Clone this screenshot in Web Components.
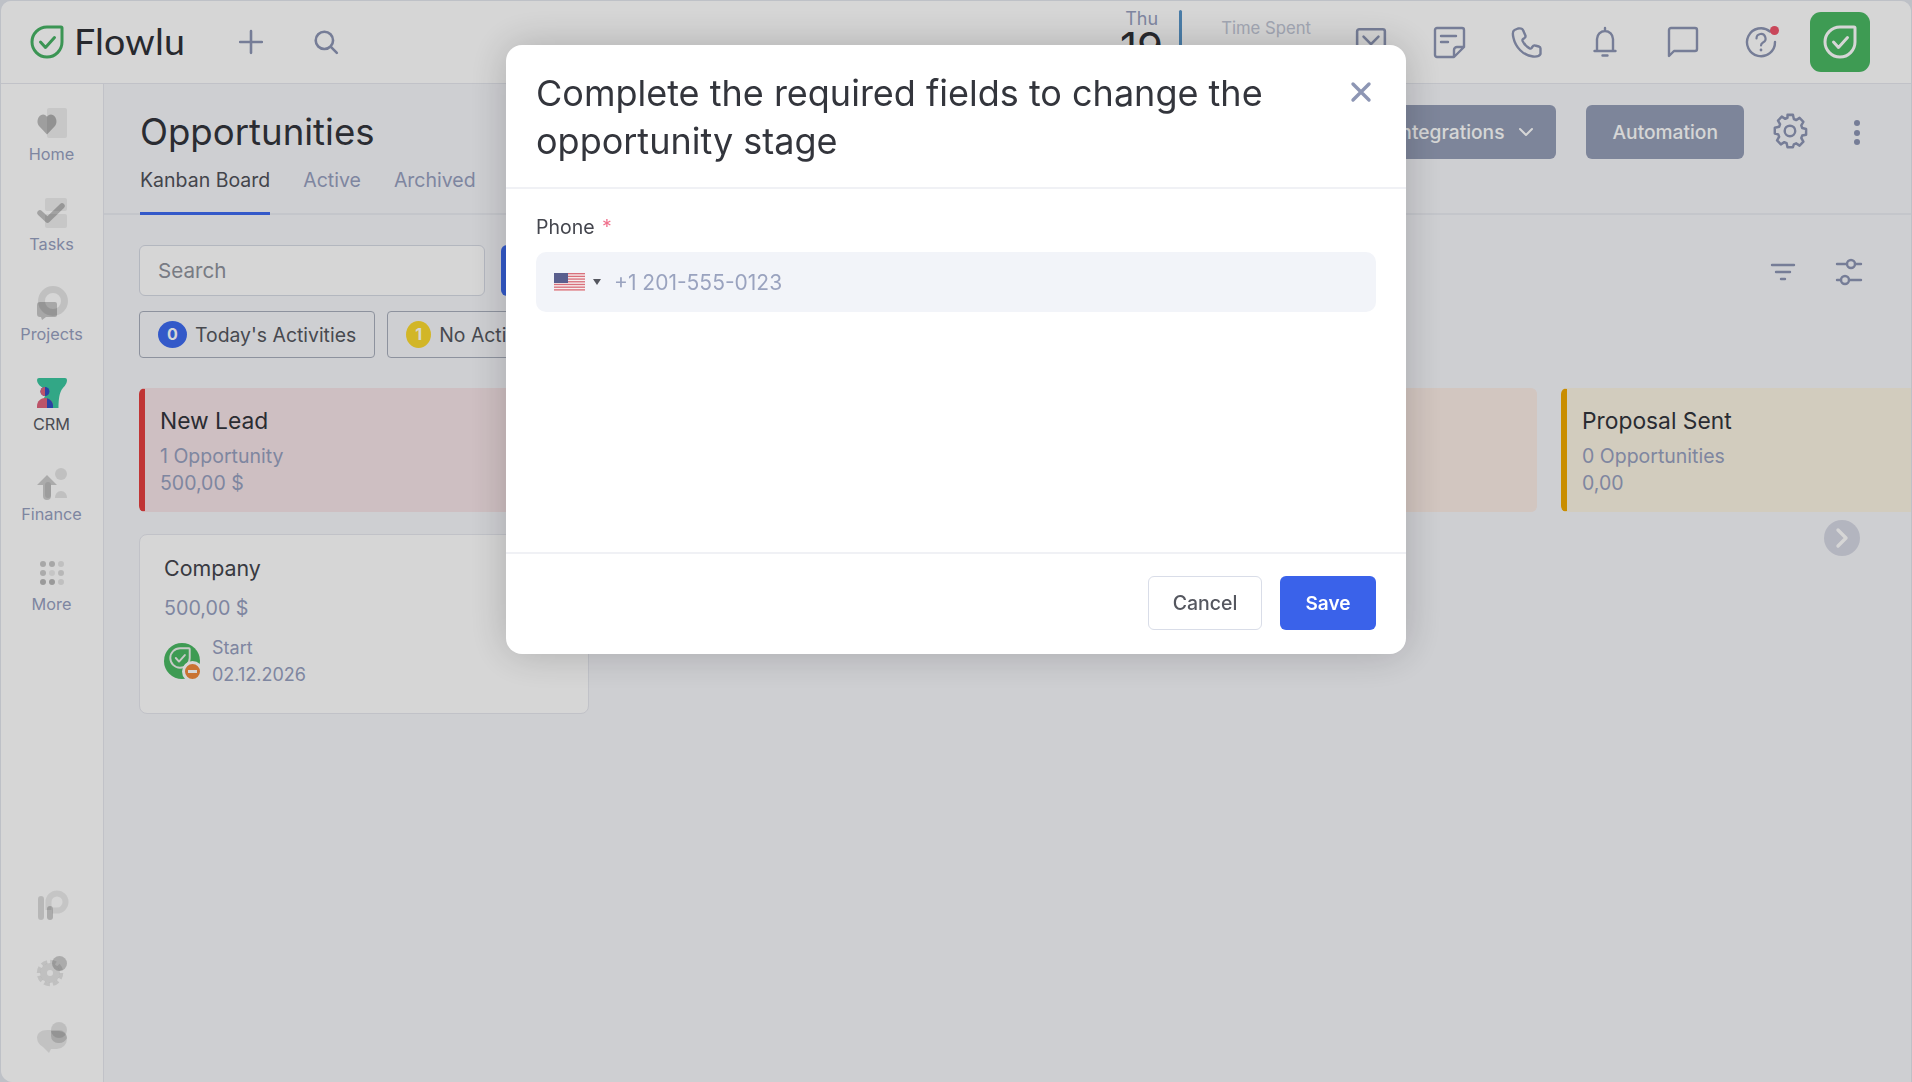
<!doctype html>
<html lang="en">
<head>
<meta charset="utf-8">
<title>Flowlu</title>
<style>
  html, body { margin: 0; height: 100%; background: #e3e6ee; overflow: hidden; }
  body { font-family: Inter, "Liberation Sans", sans-serif; }
</style>
</head>
<body>
<fl-app>
  <fl-topbar slot="top"></fl-topbar>
  <fl-sidebar slot="side"></fl-sidebar>
  <fl-page-head slot="main" title="Opportunities"></fl-page-head>
  <fl-toolbar slot="main"></fl-toolbar>
  <fl-board slot="main">
    <fl-column color="#e53e3e" tint="#f6e4e7" title="New Lead" count="1 Opportunity" sum="500,00 $">
      <fl-deal title="Company" sum="500,00 $" start="02.12.2026"></fl-deal>
    </fl-column>
    <fl-column color="#e07b3e" tint="#fbece5"></fl-column>
    <fl-column color="#e8894a" tint="#fbece5"></fl-column>
    <fl-column color="#f0a800" tint="#fbf3e3" title="Proposal Sent" count="0 Opportunities" sum="0,00"></fl-column>
  </fl-board>
</fl-app>
<fl-modal title="Complete the required fields to change the opportunity stage">
  <fl-phone-field label="Phone" placeholder="+1 201-555-0123"></fl-phone-field>
</fl-modal>

<script>
const muted = "#97a0bf";

const icons = {
	plus: `<path d="M12 2v20M2 12h20" fill="none" stroke="currentColor" stroke-width="2.4" stroke-linecap="round"/>`,
	search: `<circle cx="10.5" cy="10.5" r="8" fill="none" stroke="currentColor" stroke-width="2.4"/><path d="M16.5 16.5 22 22" fill="none" stroke="currentColor" stroke-width="2.4" stroke-linecap="round"/>`,
	mail: `<rect x="2" y="3" width="26" height="24" rx="2" fill="none" stroke="currentColor" stroke-width="2.4"/><path d="M8 10l7 7 7-7" fill="none" stroke="currentColor" stroke-width="2.4" stroke-linecap="round"/>`,
	note: `<path d="M20 31H4a2 2 0 0 1-2-2V4a2 2 0 0 1 2-2h25a2 2 0 0 1 2 2v17L21 31zM21 31v-7a3 3 0 0 1 3-3h7" fill="none" stroke="currentColor" stroke-width="2.4" stroke-linejoin="round"/><path d="M8 10h15M8 16h7" stroke="currentColor" stroke-width="2.4" stroke-linecap="round"/>`,
	phone: `<path d="M7 2.5 3.5 4C1.5 5 1.5 8 2.5 12 4.5 21 12 29.5 22 30.5c3 .3 6.5-.5 7.5-2.5v-5.5c0-1-.7-1.7-1.7-2L24 19.5c-1-.3-1.9.2-2.4 1l-1 1.500c-.5.6-1.2.8-2 .4-3-1.700-5.600-4.500-7-7.500-.3-.8-.1-1.500.5-2l1.500-1c.8-.6 1.100-1.500.8-2.400L12.200 4.500c-.4-1.300-2-2.500-5.200-2z" fill="none" stroke="currentColor" stroke-width="2.4" stroke-linejoin="round"/>`,
	bell: `<path d="M4 25V13a8 8 0 0 1 16 0v12M1.5 25h21M12 2v3M9.5 29.5h5" fill="none" stroke="currentColor" stroke-width="2.4" stroke-linecap="round" stroke-linejoin="round"/>`,
	chat: `<path d="M2 30V4a2 2 0 0 1 2-2h24a2 2 0 0 1 2 2v19a2 2 0 0 1-2 2H7z" fill="none" stroke="currentColor" stroke-width="2.4" stroke-linejoin="round"/>`,
	help: `<path d="M25 5.5A14 14 0 1 0 30 16" fill="none" stroke="currentColor" stroke-width="2.4" stroke-linecap="round"/><path d="M11.500 12.500a4.500 4.500 0 1 1 6.500 4c-1.400.8-2 1.500-2 3" fill="none" stroke="currentColor" stroke-width="2.2" stroke-linecap="round"/><circle cx="16" cy="24" r="1.400" fill="currentColor"/>`,
	gear: `<path d="M13 2h6l1 4.300 2.500 1.100 3.800-2.300 4.200 4.200-2.300 3.800 1 2.600 4.300 1.100v6l-4.300 1-1 2.500 2.300 3.800-4.200 4.200-3.800-2.300-2.500 1L19 36h-6l-1-4.300-2.500-1-3.800 2.300-4.200-4.200 2.300-3.800-1-2.500L-1 21.500v-6l4.800-1.100 1-2.600L2.500 8l4.200-4.200 3.800 2.300L13 5z" transform="translate(2.500 0) scale(.86 .9)" fill="none" stroke="currentColor" stroke-width="2.7" stroke-linejoin="round"/><circle cx="16" cy="17" r="5" fill="none" stroke="currentColor" stroke-width="2.3"/>`,
	filter: `<path d="M1 2h22M5 9h14M10 16h4" fill="none" stroke="currentColor" stroke-width="2.4" stroke-linecap="round"/>`,
	sliders: `<path d="M1 6h10M19 6h6M1 22h4M13 22h12" fill="none" stroke="currentColor" stroke-width="2.4" stroke-linecap="round"/><circle cx="15" cy="6" r="4" fill="none" stroke="currentColor" stroke-width="2.4"/><circle cx="9" cy="22" r="4" fill="none" stroke="currentColor" stroke-width="2.4"/>`,
	shield: `<path d="M31 2H17a15 15 0 1 0 15 15V3a1 1 0 0 0-1-1z" fill="none" stroke="currentColor" stroke-width="3"/><path d="M10.500 17l5 5.500 9-10" fill="none" stroke="currentColor" stroke-width="3" stroke-linecap="round" stroke-linejoin="round"/>`,
	chevron: `<path d="M2 2l6 6 6-6" fill="none" stroke="currentColor" stroke-width="2" stroke-linecap="round" stroke-linejoin="round"/>`,
	close: `<path d="M3 3l16 16M19 3 3 19" fill="none" stroke="currentColor" stroke-width="3.4" stroke-linecap="round"/>`,
	next: `<path d="M2 2l8 8-8 8" fill="none" stroke="currentColor" stroke-width="3.4" stroke-linecap="round" stroke-linejoin="round"/>`,
	home: `<rect x="10" width="20" height="30" rx="2" fill="#000" opacity=".07"/><path d="M10 26.500 2 18C-1 14.500 .5 7 6 6.500c2 0 3.200 1 4 2.300.8-1.300 2-2.300 4-2.300 5.500.5 7 8 4 11.500z" fill="#000" opacity=".26"/>`,
	tasks: `<rect x="8" width="22" height="13" rx="2" fill="#000" opacity=".07"/><rect x="8" y="16" width="22" height="14" rx="2" fill="#000" opacity=".07"/><path d="M3 15l7.500 7L25 8" fill="none" stroke="#000" stroke-opacity=".24" stroke-width="5.500" stroke-linecap="round" stroke-linejoin="round"/>`,
	projects: `<circle cx="16" cy="13" r="11.500" fill="none" stroke="#000" stroke-opacity=".1" stroke-width="7"/><path d="M3 14h15a2 2 0 0 1 2 2v11a2 2 0 0 1-2 2H9l-4 3-1-3H3a3 3 0 0 1-3-3V17a3 3 0 0 1 3-3z" fill="#000" opacity=".22"/>`,
	crm: `<path d="M2 0h26a2 2 0 0 1 2 2c0 5-4 7-6 11-2 4-2.500 11-2.500 17H2l8-16C8 10 0 8 0 2a2 2 0 0 1 2-2z" fill="#3cc8a0"/><circle cx="8" cy="13.500" r="4.500" fill="#3050c4"/><path d="M8 9a4.500 4.500 0 0 0 0 9z" fill="#e0647c"/><path d="M0 30v-2c0-5 4-8 8-8s8 3 8 8v2z" fill="#e0647c"/><path d="M10 20.300c3.500 1 6 4 6 7.700v2H10z" fill="#3050c4"/>`,
	finance: `<circle cx="24" cy="6" r="6" fill="#000" opacity=".1"/><path d="M18 30c0-4 2.500-7 6-7s6 3 6 7z" fill="#000" opacity=".1"/><path d="M10 7 0 17h6v11a4 4 0 0 0 8 0V17h6z" fill="#000" opacity=".2"/><rect x="8" y="14" width="6" height="16" rx="3" fill="#000" opacity=".08"/>`,
	pulse: `<path d="M15 20v-8a8.500 8.500 0 1 1 8.500 8.500H19" transform="translate(-3.500 0)" fill="none" stroke="#000" stroke-opacity=".08" stroke-width="6"/><rect x="1" y="6" width="6" height="24" rx="3" fill="#000" opacity=".14"/><rect x="10" y="16" width="6" height="14" rx="3" fill="#000" opacity=".2"/>`,
	tools: `<g fill="none" stroke="#000" stroke-opacity=".1"><circle cx="13" cy="17" r="6.500" stroke-width="7"/><circle cx="13" cy="17" r="11.500" stroke-width="3.500" stroke-dasharray="6 3"/></g><circle cx="22.500" cy="7.500" r="7.500" fill="#000" opacity=".2"/>`,
	support: `<path d="M10 8h12a8 8 0 0 1 8 8v1a10 10 0 0 1-10 10h-6l-2 4-6-6a11 11 0 0 1-6-9c0-5 4-8 10-8z" fill="#000" opacity=".09"/><circle cx="22" cy="8" r="8" fill="#000" opacity=".11"/><path d="M14 9v5a7 7 0 0 0 7 7 9 9 0 0 0 9-5c-.3-4-3.500-7-8-7z" fill="#000" opacity=".14"/>`,
};

// inline svg for a name from the table above
function svg(name, w, h, box) {
	return `<svg xmlns="http://www.w3.org/2000/svg" width="${w}" height="${h}" viewBox="${box || `0 0 ${w} ${h}`}" style="display:block;flex:none;overflow:visible">${icons[name]}</svg>`;
}

class Base extends HTMLElement {
	constructor() {
		super();
		this.attachShadow({ mode: "open" });
	}
	attr(name) {
		return this.getAttribute(name) ?? "";
	}
}

customElements.define(
	"fl-app",
	class extends Base {
		connectedCallback() {
			this.shadowRoot.innerHTML = `
				<style>
					:host { display: grid; grid-template: 83px 1fr / 103px 1fr; width: 1910px; height: 1081px; margin: 1px 0 0 1px; background: #f6f7fb; border-radius: 10px 10px 0 12px; overflow: hidden; position: relative; }
					.top { grid-column: 1 / 3; }
					.main { display: flex; flex-direction: column; min-width: 0; overflow: hidden; }
				</style>
				<div class="top"><slot name="top"></slot></div>
				<slot name="side"></slot>
				<div class="main"><slot name="main"></slot></div>`;
		}
	},
);

customElements.define(
	"fl-topbar",
	class extends Base {
		connectedCallback() {
			const dot = `<i style="position:absolute;left:25px;top:0;width:9px;height:9px;border-radius:50%;background:#f0556c"></i>`;
			this.shadowRoot.innerHTML = `
				<style>
					:host { display: flex; align-items: center; height: 83px; box-sizing: border-box; background: #fff; border-bottom: 1px solid #e6e8ef; padding: 0 41px 0 29px; color: #8d96b4; }
					.logo { display: flex; align-items: center; gap: 10px; color: #47b265; width: 180px; }
					.logo span { font: 400 37.5px/1 Lato, sans-serif; color: #2f3137; letter-spacing: .2px; margin-top: -2px; }
					.add { margin-left: 28px; }
					.find { margin-left: 49px; }
					.date { margin-left: auto; font-size: 18px; line-height: 20px; text-align: center; align-self: flex-start; padding-top: 8px; color: ${muted}; }
					.date b { display: block; font: 400 42px/30px Inter, sans-serif; color: #2f3137; margin-top: 4px; }
					.bar { width: 3px; height: 40px; background: #5895c8; margin: 9px 0 0 16px; align-self: flex-start; border-radius: 2px; }
					.spent { margin-left: 39px; font-size: 16.7px; color: #c2c7d6; align-self: flex-start; padding-top: 17px; }
					.tool { display: flex; align-items: center; margin-left: 21px; }
					.tool > div { width: 78px; display: flex; justify-content: center; position: relative; }
					.app { width: 60px; height: 60px; border-radius: 11px; background: #4ab963; color: #fff; display: flex; align-items: center; justify-content: center; margin-left: 10px; }
				</style>
				<div class="logo">${svg("shield", 34, 34)}<span>Flowlu</span></div>
				<div class="add">${svg("plus", 26, 26, "0 0 24 24")}</div>
				<div class="find">${svg("search", 26, 26, "0 0 24 24")}</div>
				<div class="date">Thu<b>19</b></div>
				<div class="bar"></div>
				<div class="spent">Time Spent</div>
				<div class="tool">
					<div>${svg("mail", 32, 32, "0 0 30 30")}</div>
					<div>${svg("note", 33, 33)}</div>
					<div>${svg("phone", 32, 32)}</div>
					<div>${svg("bell", 24, 32)}</div>
					<div>${svg("chat", 32, 32)}</div>
					<div><span style="position:relative;display:block">${svg("help", 32, 32)}${dot}</span></div>
				</div>
				<div class="app">${svg("shield", 34, 34)}</div>`;
		}
	},
);

customElements.define(
	"fl-nav-item",
	class extends Base {
		connectedCallback() {
			this.shadowRoot.innerHTML = `
				<style>
					:host { display: flex; flex-direction: column; align-items: center; height: 90px; font-size: 16.3px; line-height: 20px; color: ${muted}; }
					:host([active]) { color: #5a5c64; }
					span { margin-top: 6px; }
				</style>
				<slot></slot><span>${this.attr("label")}</span>`;
		}
	},
);

customElements.define(
	"fl-sidebar",
	class extends Base {
		connectedCallback() {
			let dots = "";
			const shade = [.22, .22, .1, .2, .08, .14, .28, .28, .1];
			shade.forEach((o, i) => {
				dots += `<circle cx="${3 + (i % 3) * 9}" cy="${3 + Math.floor(i / 3) * 9}" r="3" fill="#000" opacity="${o}"/>`;
			});
			this.shadowRoot.innerHTML = `
				<style>
					:host { display: flex; flex-direction: column; background: #fff; border-right: 1px solid #e6e8ef; padding: 24px 1px 0 0; box-sizing: border-box; height: 998px; width: 103px; }
					.low { margin-top: auto; display: flex; flex-direction: column; align-items: center; gap: 36px; padding-bottom: 30px; }
					svg { display: block; }
				</style>
				<fl-nav-item label="Home">${svg("home", 30, 30)}</fl-nav-item>
				<fl-nav-item label="Tasks">${svg("tasks", 30, 30)}</fl-nav-item>
				<fl-nav-item label="Projects">${svg("projects", 30, 30)}</fl-nav-item>
				<fl-nav-item label="CRM" active>${svg("crm", 30, 30)}</fl-nav-item>
				<fl-nav-item label="Finance">${svg("finance", 30, 30)}</fl-nav-item>
				<fl-nav-item label="More"><svg xmlns="http://www.w3.org/2000/svg" width="30" height="30" viewBox="-3 -3 30 30" style="display:block">${dots}</svg></fl-nav-item>
				<div class="low">${svg("pulse", 30, 30)}${svg("tools", 30, 30)}${svg("support", 30, 30)}</div>`;
		}
	},
);

customElements.define(
	"fl-page-head",
	class extends Base {
		connectedCallback() {
			this.shadowRoot.innerHTML = `
				<style>
					:host { display: flex; height: 131px; box-sizing: border-box; border-bottom: 2px solid #eaecf2; padding: 26px 0 0 36px; justify-content: space-between; }
					h1 { margin: 0; font: 400 36.6px/44px Inter, sans-serif; color: #33353c; }
					nav { display: flex; gap: 33px; margin-top: 9px; font-size: 19.5px; line-height: 34px; color: ${muted}; }
					nav a { display: block; height: 52px; box-sizing: border-box; }
					nav a.on { color: #50525a; border-bottom: 3px solid #3d6bf0; }
					.acts { display: flex; align-items: flex-start; color: #8d96b4; margin-top: -5px; }
					.btn { height: 54px; border-radius: 6px; background: #969fb8; color: #fff; font: 500 19.2px/54px Inter, sans-serif; padding: 0 26px; display: flex; align-items: center; gap: 14px; box-sizing: border-box; }
					.int { margin-right: 30px; padding-right: 22px; }
					.gear { margin: 8px 45px 0 29px; }
					.more { margin: 15px 51px 0 0; width: 6px; display: flex; flex-direction: column; gap: 3.5px; }
					.more i { width: 6px; height: 6px; border-radius: 50%; background: currentColor; }
				</style>
				<div>
					<h1>${this.attr("title")}</h1>
					<nav><a class="on">Kanban Board</a><a>Active</a><a>Archived</a></nav>
				</div>
				<div class="acts">
					<div class="btn int">Integrations ${svg("chevron", 16, 10)}</div>
					<div class="btn">Automation</div>
					<div class="gear">${svg("gear", 36, 38, "0 0 34 36")}</div>
					<div class="more"><i></i><i></i><i></i></div>
				</div>`;
		}
	},
);

customElements.define(
	"fl-chip",
	class extends Base {
		connectedCallback() {
			this.shadowRoot.innerHTML = `
				<style>
					:host { display: flex; align-items: center; gap: 8px; height: 47px; box-sizing: border-box; border: 1px solid #a9afbd; border-radius: 4px; padding: 0 18px; font-size: 19.4px; color: #55575f; white-space: nowrap; }
					b { width: ${this.attr("w") || 29}px; height: 27px; border-radius: 50%; background: ${this.attr("color")}; color: #fff; font: 700 16px/27px Inter, sans-serif; text-align: center; }
				</style>
				<b>${this.attr("n")}</b><slot></slot>`;
		}
	},
);

customElements.define(
	"fl-toolbar",
	class extends Base {
		connectedCallback() {
			this.shadowRoot.innerHTML = `
				<style>
					:host { display: block; padding: 30px 0 0 35px; position: relative; color: #8d96b4; }
					.row { display: flex; gap: 12px; align-items: center; }
					.search { width: 346px; height: 51px; box-sizing: border-box; border: 1px solid #d6dae4; border-radius: 6px; background: #fff; font-size: 20.6px; line-height: 49px; padding-left: 18px; color: #8f939d; }
					.new { width: 200px; height: 51px; border-radius: 6px; background: #3d6bf0; margin-left: 4px; }
					.chips { display: flex; gap: 12px; margin-top: 15px; }
					.r { position: absolute; right: 49px; top: 43px; display: flex; gap: 41px; align-items: center; }
				</style>
				<div class="row"><div class="search">Search</div><div class="new"></div></div>
				<div class="chips"><fl-chip n="0" color="#3d6bf0">Today's Activities</fl-chip><fl-chip n="1" w="25" color="#fbd92f">No Activities</fl-chip></div>
				<div class="r">${svg("filter", 24, 18)}${svg("sliders", 26, 28)}</div>`;
		}
	},
);

customElements.define(
	"fl-board",
	class extends Base {
		connectedCallback() {
			this.shadowRoot.innerHTML = `
				<style>
					:host { display: flex; gap: 24px; padding: 30px 0 0 35px; position: relative; flex: 1; width: max-content; color: #fff; }
					.next { position: absolute; left: 1720px; top: 162px; width: 36px; height: 36px; border-radius: 50%; background: #d6d8e4; display: flex; align-items: center; justify-content: center; }
				</style>
				<slot></slot>
				<div class="next">${svg("next", 12, 20)}</div>`;
		}
	},
);

customElements.define(
	"fl-column",
	class extends Base {
		connectedCallback() {
			this.shadowRoot.innerHTML = `
				<style>
					:host { display: flex; flex-direction: column; gap: 22px; width: 450px; flex: none; }
					.head { height: 124px; box-sizing: border-box; background: ${this.attr("tint")}; border: 1px solid ${this.attr("tint")}; border-left: 6px solid ${this.attr("color")}; border-radius: 6px; padding: 17px 0 0 15px; }
					h2 { margin: 0 0 7px; font: 400 22.8px/30px Inter, sans-serif; color: #33353c; }
					p { margin: 0; font-size: 19.5px; line-height: 27px; color: ${muted}; }
				</style>
				<div class="head">
					${this.hasAttribute("title") ? `<h2>${this.attr("title")}</h2><p>${this.attr("count")}</p><p>${this.attr("sum")}</p>` : ""}
				</div>
				<slot></slot>`;
		}
	},
);

customElements.define(
	"fl-deal",
	class extends Base {
		connectedCallback() {
			this.shadowRoot.innerHTML = `
				<style>
					:host { display: block; height: 180px; box-sizing: border-box; background: #fff; border: 1px solid #e6e8ef; border-radius: 8px; padding: 18px 0 0 24px; }
					h3 { margin: 0; font: 400 21.4px/30px Inter, sans-serif; color: #44464e; }
					.sum { font-size: 19.7px; line-height: 28px; margin-top: 11px; color: ${muted}; }
					.row { display: flex; gap: 12px; align-items: center; margin-top: 12px; font-size: 18px; line-height: 27px; color: ${muted}; }
					.av { position: relative; width: 36px; height: 36px; border-radius: 50%; background: #4ab963; color: #eef2ee; display: flex; align-items: center; justify-content: center; }
					.av svg { margin: -6px 0 0 -5px; }
					.av i { position: absolute; right: -3px; bottom: -3px; width: 21px; height: 21px; box-sizing: border-box; border: 3px solid #fff; border-radius: 50%; background: #f08a3c; }
					.av i::after { content: ""; position: absolute; left: 3px; right: 3px; top: 6px; height: 3px; background: #fff; }
				</style>
				<h3>${this.attr("title")}</h3>
				<div class="sum">${this.attr("sum")}</div>
				<div class="row">
					<div class="av">${svg("shield", 22, 22, "0 0 34 34")}<i></i></div>
					<div>Start<br>${this.attr("start")}</div>
				</div>`;
		}
	},
);

customElements.define(
	"fl-phone-field",
	class extends Base {
		connectedCallback() {
			let stripes = "";
			for (let i = 0; i < 7; i++) {
				stripes += `<rect y="${i * 2.7}" width="31" height="1.35" fill="#d9707c"/>`;
			}
			this.shadowRoot.innerHTML = `
				<style>
					:host { display: block; }
					label { display: block; font-size: 19.5px; line-height: 24px; color: #44464e; margin-bottom: 13px; }
					label em { font-style: normal; color: #f0708c; margin-left: 2px; }
					.input { display: flex; align-items: center; height: 60px; border-radius: 10px; background: #f2f4f9; padding-left: 18px; font-size: 21px; color: #9aa3bf; }
					.caret { width: 0; height: 0; border: 4px solid transparent; border-top: 6px solid #55575f; border-bottom: 0; margin: 0 13px 0 8px; }
				</style>
				<label>${this.attr("label")} <em>*</em></label>
				<div class="input">
					<svg xmlns="http://www.w3.org/2000/svg" width="31" height="18" viewBox="0 0 31 18" style="display:block">
						<rect width="31" height="18" fill="#f6f0f0"/>${stripes}<rect width="14" height="10" fill="#5a5f8e"/>
					</svg>
					<i class="caret"></i>
					<span>${this.attr("placeholder")}</span>
				</div>`;
		}
	},
);

customElements.define(
	"fl-modal",
	class extends Base {
		connectedCallback() {
			this.shadowRoot.innerHTML = `
				<style>
					:host { position: fixed; inset: 0; display: flex; justify-content: center; align-items: flex-start; padding: 45px 0 0; background: rgba(0, 0, 0, .16); }
					.box { width: 900px; background: #fff; border-radius: 16px; box-shadow: 0 0 40px rgba(0, 0, 0, .2); color: #33353c; }
					header { display: flex; justify-content: space-between; align-items: flex-start; height: 144px; box-sizing: border-box; border-bottom: 2px solid #f0f1f5; padding: 24px 30px 0; }
					h1 { margin: 0; font: 400 36px/48px Inter, sans-serif; width: 760px; color: #33353c; }
					.x { color: #8d96b4; margin: 12px 4px 0 0; }
					.body { height: 363px; box-sizing: border-box; padding: 26px 30px 0; }
					footer { display: flex; justify-content: flex-end; gap: 18px; border-top: 2px solid #f0f1f5; box-sizing: border-box; padding: 22px 30px 0; height: 102px; }
					button { height: 54px; box-sizing: border-box; border-radius: 6px; font: 500 19.5px Inter, sans-serif; cursor: pointer; }
					.c { width: 114px; background: #fff; border: 1px solid #d9dde8; color: #55575f; }
					.s { width: 96px; background: #3a62ea; border: 0; color: #fff; font-weight: 600; font-size: 19px; }
				</style>
				<div class="box">
					<header><h1>${this.attr("title")}</h1><div class="x">${svg("close", 22, 22)}</div></header>
					<div class="body"><slot></slot></div>
					<footer><button class="c">Cancel</button><button class="s">Save</button></footer>
				</div>`;
		}
	},
);
</script>
</body>
</html>
